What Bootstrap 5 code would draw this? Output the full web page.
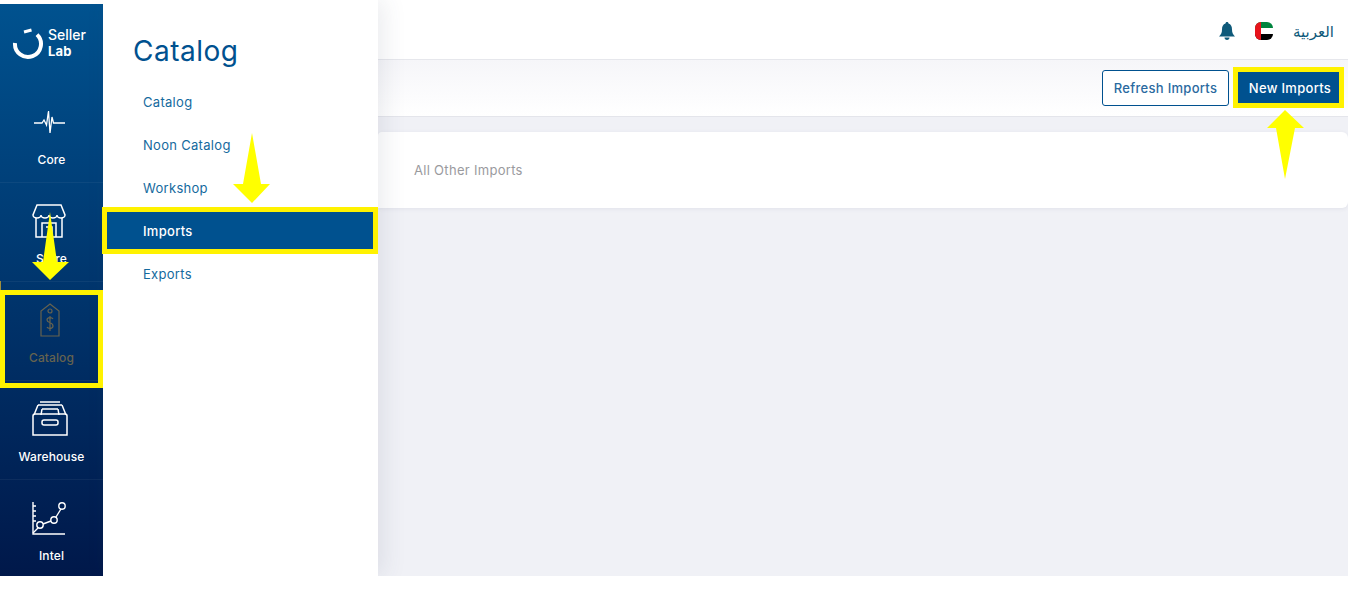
<!DOCTYPE html>
<html lang="en">
<head>
  <meta charset="UTF-8">
  <title>Seller Lab - Imports</title>
  <link href="https://cdn.jsdelivr.net/npm/bootstrap@5.3.3/dist/css/bootstrap.min.css" rel="stylesheet">
  <style>
    body {
      font-family: "Inter", "DejaVu Sans", sans-serif;
      background: #fff;
      height: 590px;
      overflow: hidden;
      position: relative;
    }
    .app-shell { height: 576px; overflow: hidden; }

    /* left icon rail */
    .rail {
      width: 103px;
      margin-top: 4px;
      background: linear-gradient(180deg, #00528f 0%, #00184a 100%);
      color: #fff;
      overflow: hidden;
    }
    .rail-logo { height: 80px; padding: 0 0 0 12px; flex-shrink: 0; }
    .rail-logo-text { font-size: 14px; line-height: 16px; font-weight: 500; margin-bottom: 2px; }
    .rail-logo-text b { font-size: 13px; font-weight: 700; display: block; letter-spacing: .2px; }
    .rail-item {
      height: 99px;
      flex-shrink: 0;
      border-bottom: 1px solid rgba(255, 255, 255, .05);
      font-size: 12px;
      font-weight: 500;
      letter-spacing: .1px;
      color: #fff;
    }
    .rail-item:last-child { border-bottom: 0; }
    .rail-icon { height: 48px; margin: 0 6px 5px 0; }
    .rail-icon-alt { margin-right: 3px; }
    .rail-item-dim { color: #66634f; }

    /* catalog sub menu */
    .side-panel {
      width: 275px;
      background: #fff;
      box-shadow: 6px 0 22px rgba(60, 70, 100, .1);
      position: relative;
      z-index: 2;
    }
    .side-title { font-size: 28px; font-weight: 400; color: #00518f; padding: 35px 0 0 30px; height: 81px; margin: 0; letter-spacing: .5px; }
    .side-link {
      height: 43px;
      padding: 1px 0 0 40px;
      display: flex;
      align-items: center;
      font-size: 13px;
      color: #156a9e;
      letter-spacing: .3px;
    }
    .side-link.active { background: #00518f; color: #fff; font-weight: 500; }

    /* main area */
    .top-bar { height: 60px; border-bottom: 1px solid #e6e7ec; padding: 2px 14px 0 0; color: #0f5a7a; }
    .lang-label { font-family: "DejaVu Sans", sans-serif; font-size: 15px; margin: 4px 0 0 20px; }
    .flag-round { width: 18px; height: 18px; border-radius: 6px; overflow: hidden; display: block; margin-left: 20px; }
    .sub-bar {
      height: 57px;
      border-bottom: 1px solid #e4e5eb;
      background: linear-gradient(180deg, #f6f6f9 0%, #fff 100%);
      padding-right: 8px;
    }
    .btn-refresh, .btn-new {
      font-size: 13px;
      font-weight: 500;
      height: 36px;
      padding: 2px 0 0;
      border-radius: 3px;
      letter-spacing: .3px;
    }
    .btn-refresh { width: 127px; background: #fff; border: 1px solid #00518f; color: #2a6a9f; }
    .btn-new { width: 102px; background: #00518f; border: 1px solid #00518f; color: #fff; border-radius: 0; margin-left: 9px; padding-left: 2px; }
    .page-body { background: #f0f1f6; padding-top: 15px; }
    .import-tabs {
      height: 76px;
      border: 0;
      border-radius: 4px 6px 6px 0;
      box-shadow: 0 1px 4px rgba(60, 70, 100, .08);
      padding: 2px 0 0 36px;
      font-size: 13px;
      letter-spacing: .3px;
      color: #9a9a9e;
    }

    /* yellow annotations drawn on the screenshot */
    .note-box { position: absolute; border: 5px solid #fff200; z-index: 5; }
    .note-catalog { left: 0; top: 290px; width: 103px; height: 98px; }
    .note-imports { left: 102px; top: 207px; width: 276px; height: 47px; }
    .note-new { left: 1233px; top: 67px; width: 111px; height: 41px; }
    .note-stub { position: absolute; left: 0; top: 281px; width: 1px; height: 9px; background: #a08f3c; z-index: 5; }
    .note-arrows { position: absolute; left: 0; top: 0; z-index: 6; pointer-events: none; }
  </style>
</head>
<body>

  <div class="app-shell d-flex">

    <div class="rail flex-shrink-0 d-flex flex-column">
      <div class="rail-logo d-flex align-items-center gap-1">
        <svg width="32" height="32" viewBox="0 0 32 32" fill="none" stroke="#fff" stroke-width="4">
          <path d="M25 6.6 A13 13 0 1 1 3 15"/>
          <path d="M12 4 L19.500 2" stroke-width="3"/>
        </svg>
        <div class="rail-logo-text">Seller<b>Lab</b></div>
      </div>

      <div class="rail-item d-flex flex-column align-items-center justify-content-center">
        <div class="rail-icon d-flex align-items-center">
          <svg width="32" height="26" viewBox="0 0 32 26" fill="none" stroke="#fff" stroke-width="1.3">
            <path d="M1 14 H9 L11 11 L12.5 14 L13.5 16 L15.5 2 L17 24 L19 8 L20.5 14 H32"/>
          </svg>
        </div>
        <span>Core</span>
      </div>

      <div class="rail-item d-flex flex-column align-items-center justify-content-center">
        <div class="rail-icon d-flex align-items-center">
          <svg width="34" height="34" viewBox="0 0 34 34" fill="none" stroke="#fff" stroke-width="1.5">
            <path d="M5 1 H29 L33 11 A4 3 0 0 1 25 11 A4 3 0 0 1 17 11 A4 3 0 0 1 9 11 A4 3 0 0 1 1 11 Z"/>
            <path d="M4 14 V33 H30 V14 M10 33 V19 H24 V33"/>
            <path d="M14 23 H20 V33"/>
          </svg>
        </div>
        <span>Store</span>
      </div>

      <div class="rail-item rail-item-dim d-flex flex-column align-items-center justify-content-center">
        <div class="rail-icon rail-icon-alt d-flex align-items-center">
          <svg width="20" height="34" viewBox="0 0 20 34" fill="none" stroke="#66634f" stroke-width="1.2">
            <path d="M10 1 L19 8 V33 H1 V8 Z"/>
            <circle cx="10" cy="8" r="2"/>
            <path d="M13 16 C12 14 7 14 7 17 C7 20 13 19 13 23 C13 26 8 26 7 24 M10 13 V28"/>
          </svg>
        </div>
        <span>Catalog</span>
      </div>

      <div class="rail-item d-flex flex-column align-items-center justify-content-center">
        <div class="rail-icon rail-icon-alt d-flex align-items-center">
          <svg width="36" height="35" viewBox="0 0 36 35" fill="none" stroke="#fff" stroke-width="1.5">
            <path d="M8 1 H28 M6 4 H30 M6 4 L2 14 M30 4 L34 14 M10 8 H26 M9 14 L10 8 M27 14 L26 8"/>
            <path d="M1 15 Q1 13 3 13 H33 Q35 13 35 15 V34 H1 Z"/>
            <rect x="10" y="19" width="16" height="5" rx="2"/>
          </svg>
        </div>
        <span>Warehouse</span>
      </div>

      <div class="rail-item d-flex flex-column align-items-center justify-content-center">
        <div class="rail-icon d-flex align-items-center">
          <svg width="34" height="34" viewBox="0 0 34 34" fill="none" stroke="#fff" stroke-width="1.4">
            <path d="M1 1 V33 H33 M1 5 H4 M1 10 H4 M1 15 H4 M1 20 H4"/>
            <path d="M1 32 L6 27 M11 23 L19 20 M24 16 L29 8"/>
            <circle cx="8" cy="24" r="3.2"/>
            <circle cx="22" cy="19" r="3.2"/>
            <circle cx="30" cy="5" r="3.2"/>
          </svg>
        </div>
        <span>Intel</span>
      </div>
    </div>

    <div class="side-panel flex-shrink-0">
      <h1 class="side-title">Catalog</h1>
      <nav class="nav flex-column">
        <a class="side-link text-decoration-none" href="#">Catalog</a>
        <a class="side-link text-decoration-none" href="#">Noon Catalog</a>
        <a class="side-link text-decoration-none" href="#">Workshop</a>
        <a class="side-link active text-decoration-none" href="#">Imports</a>
        <a class="side-link text-decoration-none" href="#">Exports</a>
      </nav>
    </div>

    <div class="flex-grow-1 d-flex flex-column">
      <div class="top-bar bg-white d-flex align-items-center justify-content-end">
        <svg width="16" height="18" viewBox="0 0 16 18" fill="#0f5a7a">
          <path d="M8 0 C9 0 9.5 .7 9.5 1.6 C12 2.4 13 4.6 13 7.5 C13 11 14 12.5 16 14.5 H0 C2 12.5 3 11 3 7.5 C3 4.6 4 2.4 6.5 1.6 C6.5 .7 7 0 8 0 Z"/>
          <path d="M5.5 15.5 H10.5 C10.5 17 9.5 18 8 18 C6.500 18 5.500 17 5.500 15.500 Z"/>
        </svg>
        <svg class="flag-round" viewBox="0 0 18 18">
          <rect width="18" height="6" fill="#00843d"/>
          <rect y="6" width="18" height="6" fill="#fff"/>
          <rect y="12" width="18" height="6" fill="#000"/>
          <rect width="6" height="18" fill="#e8131b"/>
        </svg>
        <span class="lang-label" dir="rtl">العربية</span>
      </div>
      <div class="sub-bar d-flex align-items-center justify-content-end">
        <button type="button" class="btn btn-refresh">Refresh Imports</button>
        <button type="button" class="btn btn-new">New Imports</button>
      </div>
      <div class="page-body flex-grow-1">
        <div class="card import-tabs d-flex flex-row align-items-center">All Other Imports</div>
      </div>
    </div>
  </div>

  <div class="note-stub"></div>
  <div class="note-box note-catalog"></div>
  <div class="note-box note-imports"></div>
  <div class="note-box note-new"></div>
  <svg class="note-arrows" width="1348" height="590" fill="#ffff00">
    <polygon points="50,212 57,262 69,262 50,280 32,262 43,262"/>
    <polygon points="252,133 261,184 270,184 252,203 233,184 243,184"/>
    <polygon points="1285,110 1304,128 1295,128 1285,179 1276,128 1267,128"/>
  </svg>

</body>
</html>
